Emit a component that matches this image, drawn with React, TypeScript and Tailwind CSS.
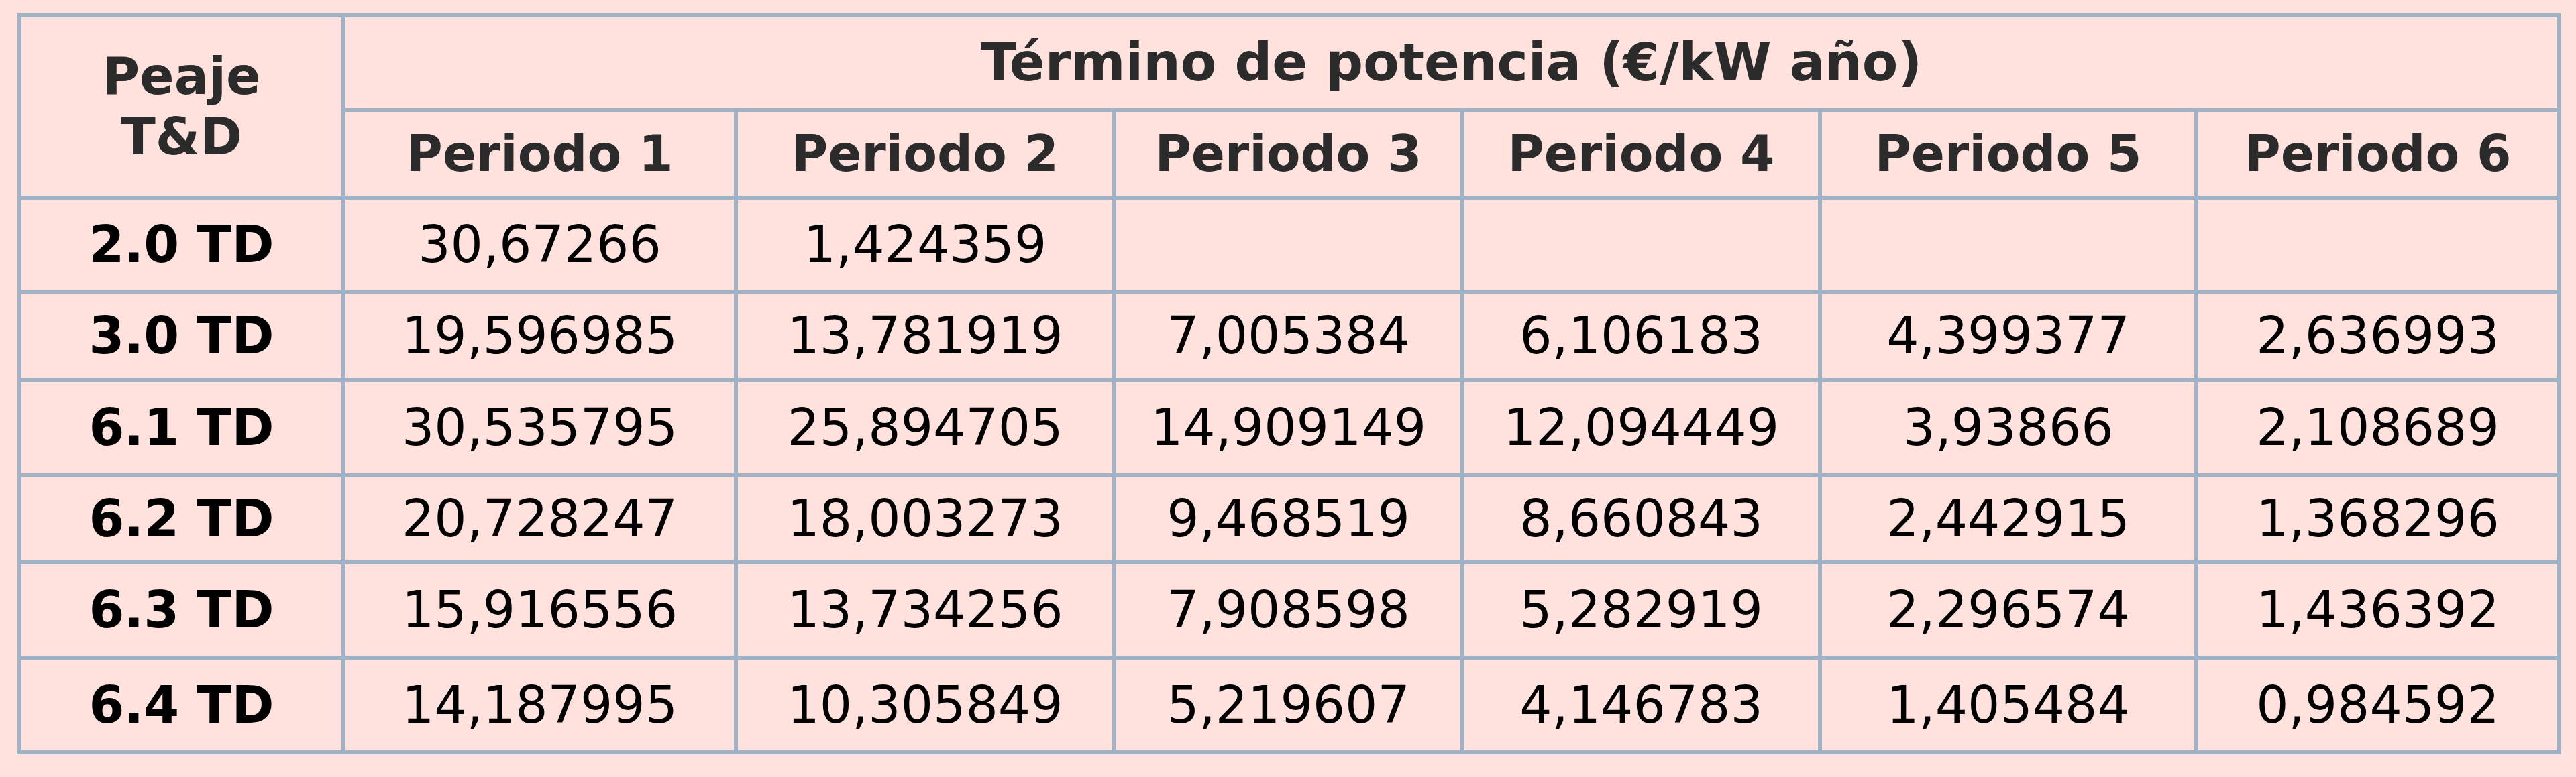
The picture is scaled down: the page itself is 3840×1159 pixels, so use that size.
const periods = ['Periodo 1', 'Periodo 2', 'Periodo 3', 'Periodo 4', 'Periodo 5', 'Periodo 6'];

const rows = [
  { peaje: '2.0 TD', values: ['30,67266', '1,424359', '', '', '', ''], h: 'h-[140px]' },
  { peaje: '3.0 TD', values: ['19,596985', '13,781919', '7,005384', '6,106183', '4,399377', '2,636993'], h: 'h-[132px]' },
  { peaje: '6.1 TD', values: ['30,535795', '25,894705', '14,909149', '12,094449', '3,93866', '2,108689'], h: 'h-[142px]' },
  { peaje: '6.2 TD', values: ['20,728247', '18,003273', '9,468519', '8,660843', '2,442915', '1,368296'], h: 'h-[130px]' },
  { peaje: '6.3 TD', values: ['15,916556', '13,734256', '7,908598', '5,282919', '2,296574', '1,436392'], h: 'h-[142px]' },
  { peaje: '6.4 TD', values: ['14,187995', '10,305849', '5,219607', '4,146783', '1,405484', '0,984592'], h: 'h-[141px]' },
];

const cell = 'border-[6px] border-[#a0b2c6] text-center align-middle p-0';

const App = () => {
  return (
    <div className="bg-[#ffe2de] min-h-[1159px] w-[3840px] pt-[20px] pl-[26px] font-['DejaVu_Sans',sans-serif] text-[76px]">
      <table className="border-collapse table-fixed w-[3786px]">
        <colgroup>
          <col className="w-[483px]" />
          <col className="w-[585px]" />
          <col className="w-[564px]" />
          <col className="w-[519px]" />
          <col className="w-[533px]" />
          <col className="w-[561px]" />
          <col className="w-[541px]" />
        </colgroup>
        <thead>
          <tr className="h-[141px]">
            <th rowSpan={2} className={`${cell} font-bold text-[#2b2b2b] text-[76px] leading-[90px]`}>
              Peaje
              <br />
              T&amp;D
            </th>
            <th colSpan={6} className={`${cell} font-bold text-[#2b2b2b] text-[78px]`}>
              Término de potencia (€/kW año)
            </th>
          </tr>
          <tr className="h-[131px]">
            {periods.map(p => (
              <th key={p} className={`${cell} font-bold text-[#2b2b2b] text-[74px]`}>{p}</th>
            ))}
          </tr>
        </thead>
        <tbody>
          {rows.map(row => (
            <tr key={row.peaje} className={row.h}>
              <td className={`${cell} font-bold text-black text-[76px]`}>{row.peaje}</td>
              {row.values.map((v, i) => (
                <td key={i} className={`${cell} text-black`}>{v}</td>
              ))}
            </tr>
          ))}
        </tbody>
      </table>
    </div>
  );
};

export default App;
